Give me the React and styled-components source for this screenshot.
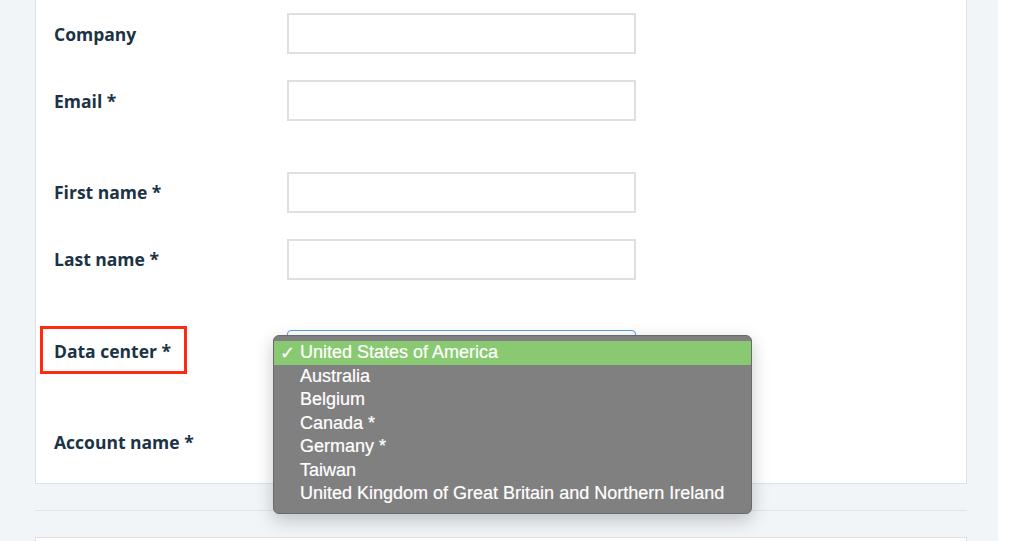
import React from "react";
import styled, { createGlobalStyle } from "styled-components";

const GlobalStyle = createGlobalStyle`
  html, body {
    margin: 0;
    padding: 0;
    background: #ffffff;
  }
  #root {
    height: 541px;
    overflow: hidden;
  }
`;

const countries = [
  "United States of America",
  "Australia",
  "Belgium",
  "Canada *",
  "Germany *",
  "Taiwan",
  "United Kingdom of Great Britain and Northern Ireland",
];

const groups = [
  [{ label: "Company" }, { label: "Email *" }],
  [{ label: "First name *" }, { label: "Last name *" }],
  [{ label: "Data center *", select: true }],
  [{ label: "Account name *" }],
];

const App = () => {
  return (
    <>
      <GlobalStyle />
      <Page>
        <Content>
          <Card>
            {groups.map((group, gi) => (
              <Group key={gi}>
                {group.map((field) => (
                  <Row key={field.label}>
                    <LabelCell>
                      <Label>{field.label}</Label>
                      {field.select && <Highlight />}
                    </LabelCell>
                    {field.select ? (
                      <SelectCell>
                        <SelectBox />
                        <Menu>
                          {countries.map((c, i) => (
                            <Option key={c} $active={i === 0}>
                              <Check>{i === 0 ? "✓" : ""}</Check>
                              {c}
                            </Option>
                          ))}
                        </Menu>
                      </SelectCell>
                    ) : (
                      <Input />
                    )}
                  </Row>
                ))}
              </Group>
            ))}
          </Card>
          <Separator />
          <NextCard />
        </Content>
        <Gutter />
      </Page>
    </>
  );
};

const Page = styled.div`
  display: flex;
  height: 541px;
`;

const Content = styled.div`
  width: 998px;
  background: #f2f5f8;
  padding-left: 35px;
  padding-right: 31px;
  box-sizing: border-box;
`;

const Gutter = styled.div`
  flex: 1;
  background: #ffffff;
`;

const Card = styled.div`
  background: #ffffff;
  border: 1px solid #dde1e5;
  border-top: none;
  padding: 13px 0 20px 18px;
  display: flex;
  flex-direction: column;
  gap: 50.5px;
`;

const Group = styled.div`
  display: flex;
  flex-direction: column;
  gap: 26px;
`;

const Row = styled.div`
  display: grid;
  grid-template-columns: 233px 349px;
  height: 41px;
  align-items: center;
`;

const LabelCell = styled.div`
  position: relative;
  height: 100%;
  display: flex;
  align-items: center;
`;

const Label = styled.span`
  font-family: "Open Sans", "Noto Sans", sans-serif;
  font-weight: 700;
  font-size: 17.5px;
  color: #1b3344;
`;

const Highlight = styled.div`
  position: absolute;
  top: -4px;
  bottom: -3px;
  left: -14px;
  width: 147px;
  border: 3px solid #ff2a10;
  box-sizing: border-box;
`;

const Input = styled.div`
  height: 41px;
  border: 2px solid #dfdfdf;
  box-sizing: border-box;
  background: #ffffff;
`;

const SelectCell = styled.div`
  position: relative;
  height: 41px;
`;

const SelectBox = styled.div`
  height: 41px;
  border: 1px solid #5a9ee0;
  border-radius: 4px;
  box-sizing: border-box;
  background: #ffffff;
`;

const Menu = styled.div`
  position: absolute;
  top: 5px;
  left: -14px;
  width: 479px;
  box-sizing: border-box;
  padding: 5px 0 7px;
  background: #808080;
  border: 1px solid #6a6a6a;
  border-radius: 6px;
  box-shadow: 0 6px 18px rgba(0, 0, 0, 0.22);
  z-index: 5;
`;

const Option = styled.div`
  display: flex;
  align-items: center;
  height: 23.5px;
  font-family: "Liberation Sans", Arial, sans-serif;
  font-size: 18px;
  color: #ffffff;
  background: ${(p) => (p.$active ? "#88c971" : "transparent")};
  white-space: nowrap;
  -webkit-text-stroke: 0.2px #ffffff;
`;

const Check = styled.span`
  display: inline-block;
  width: 26px;
  padding-left: 6px;
  box-sizing: border-box;
  font-family: "DejaVu Sans", sans-serif;
  font-size: 18px;
  font-weight: 700;
`;

const Separator = styled.div`
  height: 1px;
  background: #e2e6ea;
  margin: 26px 0;
`;

const NextCard = styled.div`
  height: 40px;
  background: #ffffff;
  border: 1px solid #dde1e5;
`;

export default App;
